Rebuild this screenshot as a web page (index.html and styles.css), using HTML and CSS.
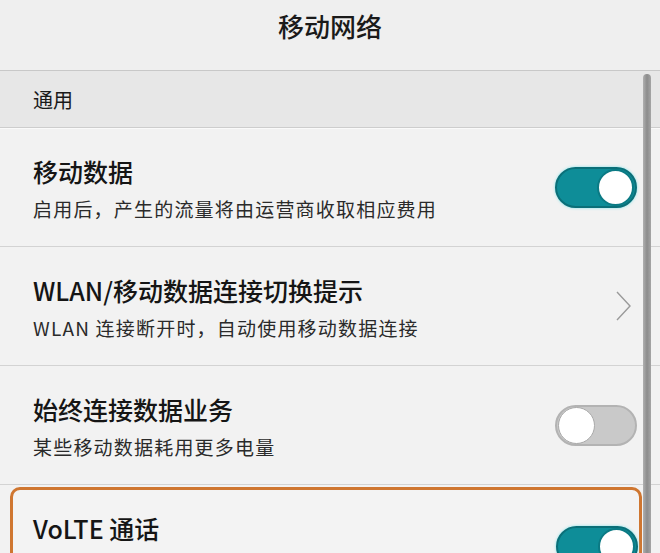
FILE: index.html
```html
<!DOCTYPE html>
<html lang="zh-CN">
<head>
<meta charset="utf-8">
<title>移动网络</title>
<link rel="stylesheet" href="styles.css">
</head>
<body>
<div class="screen">
  <header class="header"><h1 class="header-title">移动网络</h1></header>
  <div class="section">通用</div>
  <div class="list">
    <div class="row">
      <div class="texts">
        <div class="title">移动数据</div>
        <div class="sub">启用后，产生的流量将由运营商收取相应费用</div>
      </div>
      <span class="toggle on"><span class="knob"></span></span>
    </div>
    <div class="row">
      <div class="texts">
        <div class="title">WLAN/移动数据连接切换提示</div>
        <div class="sub">WLAN 连接断开时，自动使用移动数据连接</div>
      </div>
      <svg class="chevron" width="18" height="30" viewBox="0 0 18 30"><path d="M2 1 L15 15 L2 29" fill="none" stroke="#9a9a9a" stroke-width="1.4"/></svg>
    </div>
    <div class="row">
      <div class="texts">
        <div class="title">始终连接数据业务</div>
        <div class="sub">某些移动数据耗用更多电量</div>
      </div>
      <span class="toggle off"><span class="knob"></span></span>
    </div>
    <div class="highlight">
      <div class="row row-inner">
        <div class="texts">
          <div class="title">VoLTE 通话</div>
          <div class="sub">开启后，通话时可同时使用数据业务</div>
        </div>
        <span class="toggle on"><span class="knob"></span></span>
      </div>
    </div>
  </div>
  <div class="scrollbar"></div>
</div>
</body>
</html>
```
FILE: styles.css
```css
* { box-sizing: border-box; }
html, body { margin: 0; padding: 0; }
body {
  width: 660px;
  height: 553px;
  overflow: hidden;
  background: #f2f2f2;
  font-family: "Noto Sans CJK SC", "Noto Sans", sans-serif;
  color: #151515;
}
.screen { position: relative; width: 660px; height: 553px; overflow: hidden; }
.header {
  height: 71px;
  background: #efefef;
  display: flex;
  align-items: center;
  justify-content: center;
  border-bottom: 1px solid #c8c8c8;
  box-shadow: 0 1px 0 #fafafa;
  padding-bottom: 18px;
}
.header-title {
  margin: 0;
  font-size: 26px;
  font-weight: 500;
  line-height: 34px;
  color: #1a1a1a;
}
.section {
  height: 57px;
  background: #e7e7e7;
  padding-left: 33px;
  display: flex;
  align-items: center;
  font-size: 20px;
  line-height: 28px;
  color: #1a1a1a;
  border-bottom: 1px solid #cdcdcd;
  box-shadow: 0 1px 0 #fafafa;
  padding-top: 2px;
}
.list { display: flex; flex-direction: column; }
.row {
  height: 119px;
  display: flex;
  align-items: center;
  justify-content: space-between;
  padding: 0 23px 0 33px;
  border-bottom: 1px solid #d3d3d3;
}
.texts { display: flex; flex-direction: column; gap: 8px; margin-top: 2px; }
.title { font-size: 25px; font-weight: 500; line-height: 34px; color: #151515; }
.sub { font-size: 19px; line-height: 26px; color: #2a2a2a; letter-spacing: 1.2px; }
.toggle {
  position: relative;
  display: flex;
  align-items: center;
  width: 82px;
  height: 41px;
  border-radius: 21px;
  padding: 3px;
}
.toggle.on {
  background: #0e8d98;
  border: 2px solid #0b6f78;
  justify-content: flex-end;
  box-shadow: 0 0 3px #7fe3ea;
}
.toggle.off {
  background: #c9c9c9;
  border: 2px solid #b3b3b3;
  justify-content: flex-start;
}
.knob {
  width: 37px;
  height: 37px;
  border-radius: 50%;
  background: #ffffff;
}
.toggle.on .knob { border: 2px solid #0b7a84; margin-right: -2px; }
.toggle.off .knob { border: 1px solid #a9a9a9; margin-left: -2px; }
.chevron { margin-right: 4px; }
.highlight {
  margin: 2px 18px 0 10px;
  border: 3px solid #cf7630;
  border-radius: 10px;
  background: #f3f3f3;
  height: 120px;
}
.row-inner {
  border-bottom: none;
  padding: 0 1px 0 20px;
  height: 112px;
}
.row-inner .texts { margin-top: -2px; }
.scrollbar {
  position: absolute;
  left: 643px;
  top: 74px;
  width: 8px;
  height: 500px;
  border-radius: 4px 4px 0 0;
  background: linear-gradient(90deg, #b0b0b0, #8c8c8c 50%, #a5a5a5);
}
```
